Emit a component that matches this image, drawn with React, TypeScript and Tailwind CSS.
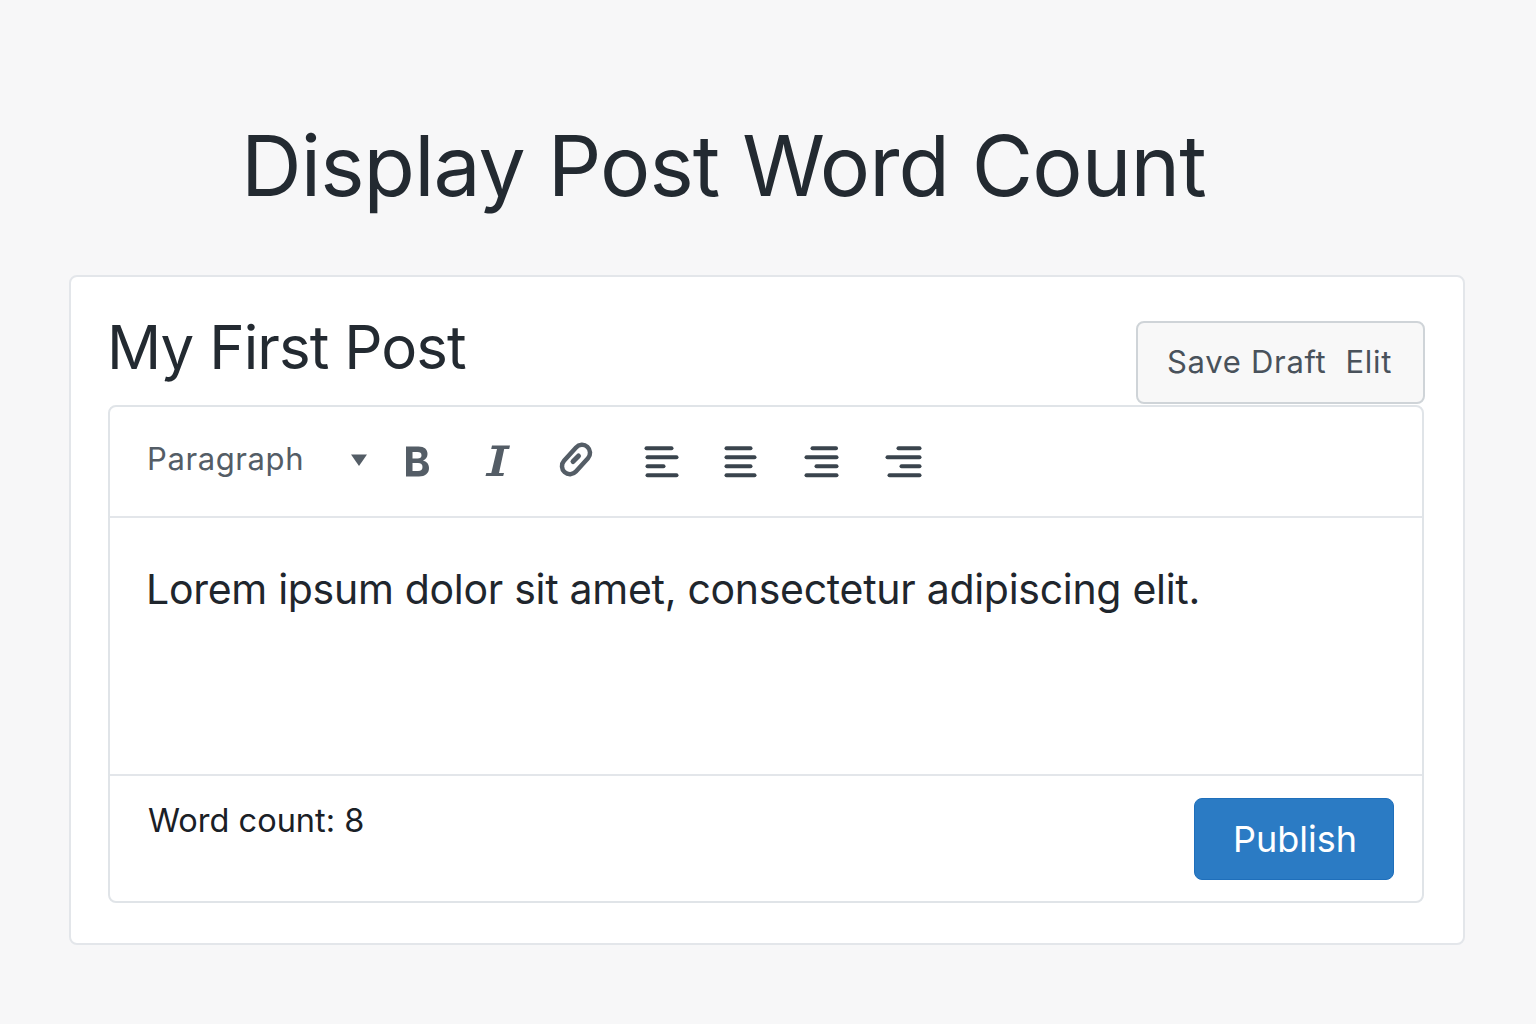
const iconColor = "#545d66";
const lineColor = "#3a444d";

function AlignIcon({ lines }: { lines: [number, number][] }) {
  return (
    <svg width="38" height="36" viewBox="0 0 38 36" fill="none" stroke={lineColor} strokeWidth="4" strokeLinecap="round">
      {lines.map(([a, b], i) => (
        <line key={i} x1={a + 1.5} x2={b - 1.5} y1={6.2 + i * 9} y2={6.2 + i * 9} />
      ))}
    </svg>
  );
}

export default function App() {
  return (
    <div className="min-h-screen w-full bg-[#f7f7f8] pt-[120px] px-[69px] font-['Inter',sans-serif]">
      <h1 className="ml-[172px] text-[84px] leading-[92px] font-normal tracking-[-0.9px] text-[#232a31] whitespace-nowrap">
        Display Post Word Count
      </h1>

      <div className="mt-[63px] w-[1396px] h-[670px] bg-white border-2 border-[#e3e6ea] rounded-[8px] pt-[30px] px-[37px]">
        <div className="flex justify-between h-[98px]">
          <h2 className="-ml-[1px] text-[60px] leading-[80px] font-normal tracking-[-0.95px] text-[#232a31]">My First Post</h2>
          <button className="mt-[14px] w-[289px] h-[83px] ml-auto mr-[1px] bg-[#f8f8f8] border-2 border-[#cfd4d8] rounded-[8px] text-[31px] tracking-[0.7px] text-[#49525b] flex items-center pl-[29px] whitespace-nowrap">
            <span>Save Draft</span>
            <span className="ml-[19px]">Elit</span>
          </button>
        </div>

        <div className="w-[1316px] h-[498px] border-2 border-[#e0e4e8] rounded-[8px] flex flex-col">
          <div className="h-[111px] border-b-2 border-[#e3e6ea] flex items-center pl-[37px] pb-[4px]">
            <span className="text-[31px] tracking-[0.6px] text-[#545d66] w-[203px]">Paragraph</span>
            <svg width="18" height="12" viewBox="0 0 18 12" className="mr-[35px]">
              <path d="M1 .5h16l-8 11.500z" fill={iconColor} />
            </svg>
            <svg width="28" height="36" viewBox="0 -1.500 28 36" className="mr-[51px] overflow-visible">
              <path
                d="M3 3h12.500c6 0 9 3 9 7.500 0 3.200-1.700 5.500-4.500 6.500 3.500 .8 6 3.500 6 7.500 0 5.500-4 8.500-10 8.500H3zM9.500 8.500v6.500h5c2.700 0 4-1.200 4-3.300s-1.300-3.200-4-3.200zM9.500 19.500v8h5.500c3 0 4.500-1.400 4.500-4s-1.500-4-4.500-4z"
                fill={iconColor}
                fillRule="evenodd"
              />
            </svg>
            <svg width="30" height="36" viewBox="0 -1.500 30 36" className="mr-[44px] overflow-visible">
              <path d="M10 2h18l-.8 3.500h-5L17 29.500h5l-.8 3H3.500l.8-3h5L15 5.500H9.200z" fill={iconColor} />
            </svg>
            <svg width="36" height="36" viewBox="0 0 36 36" fill="none" stroke={iconColor} className="mr-[51px] overflow-visible">
              <rect x="-17" y="-8" width="34" height="16" rx="8" strokeWidth="4.500" transform="translate(20 17.500) rotate(-48)" />
              <line x1="17" y1="19.500" x2="22.500" y2="14" strokeWidth="5" strokeLinecap="round" />
            </svg>
            <div className="flex items-center gap-[42px]">
              <AlignIcon lines={[[2, 30], [3, 35], [3, 22], [3, 35]]} />
              <AlignIcon lines={[[2, 29], [2, 33], [2, 29], [2, 33]]} />
            </div>
            <div className="ml-[42px]">
              <AlignIcon lines={[[8, 34.500], [2, 35], [12, 35], [2, 35]]} />
            </div>
            <div className="ml-[44px]">
              <AlignIcon lines={[[12, 36], [1, 36], [15, 36], [3, 36]]} />
            </div>
          </div>

          <div className="h-[258px] border-b-2 border-[#e3e6ea] pt-[43px] pl-[36px] text-[41px] leading-[56px] font-normal tracking-[-0.29px] text-[#1f262d]">
            Lorem ipsum dolor sit amet, consectetur adipiscing elit.
          </div>

          <div className="flex-1 flex justify-between pl-[38px] pr-[28px] pt-[22px]">
            <span className="text-[32.500px] leading-[46px] text-[#1a2026]">Word count: 8</span>
            <button className="w-[200px] h-[82px] pl-[2px] bg-[#2b7bc4] border border-[#1f6fbb] rounded-[8px] text-white text-[36px]">
              Publish
            </button>
          </div>
        </div>
      </div>
    </div>
  );
}
